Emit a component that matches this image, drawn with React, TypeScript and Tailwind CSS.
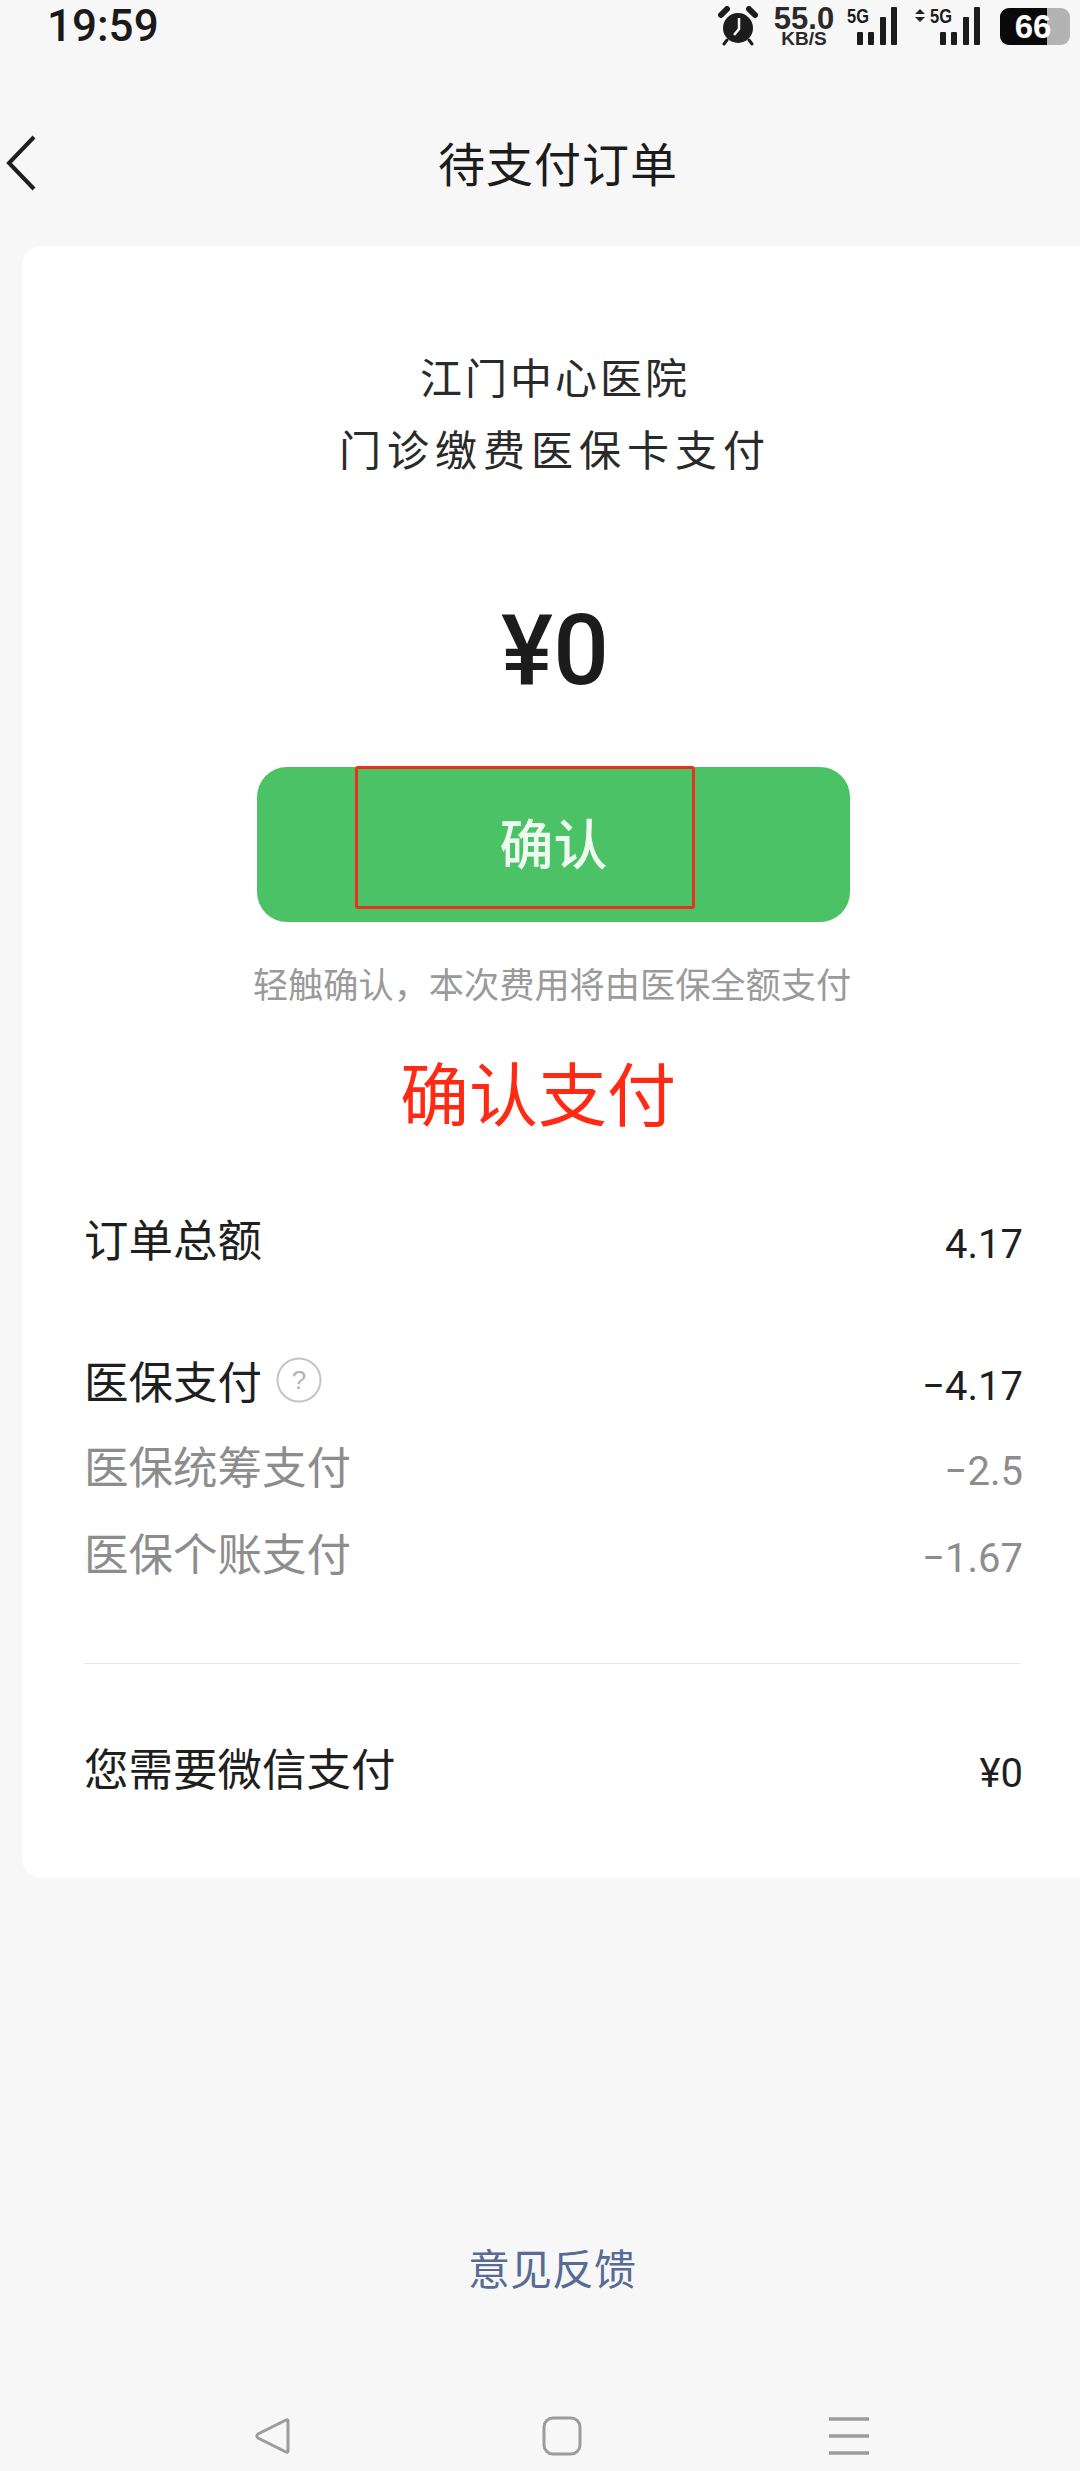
const cjk = { fontFamily: '"Noto Sans CJK SC", sans-serif' };
const sans = { fontFamily: '"Liberation Sans", sans-serif' };
const roboto = { fontFamily: 'Roboto, sans-serif' };

function Signal({ arrows }: { arrows?: boolean }) {
  return (
    <svg width={arrows ? 65 : 50} height="44" viewBox={arrows ? "0 -6 65 44" : "0 -6 50 44"} className="block mt-[-6px]">
      {arrows && <path d="M0 7l5-5 5 5zM0 10l5 5 5-5z" fill="#222" />}
      <g transform={arrows ? "translate(15 0)" : ""} fill="#1c1c1c">
        <text x="0" y="16" fontSize="20" fontWeight="700" fontFamily="Liberation Sans" textLength="22" lengthAdjust="spacingAndGlyphs">5G</text>
        <rect x="10" y="25" width="6" height="13" rx="1" />
        <rect x="21" y="25" width="6" height="13" rx="1" />
        <rect x="33" y="10" width="6" height="28" rx="1" />
        <rect x="44" y="0" width="6" height="38" rx="1" />
      </g>
    </svg>
  );
}

function Row({ label, value, muted, strong, className }: { label: string; value: string; muted?: boolean; strong?: boolean; className?: string }) {
  return (
    <div className={`flex items-center justify-between h-[54px] ${muted ? "text-[#8d8d8d]" : "text-[#1f1f1f]"} ${className ?? ""}`}>
      <div className="flex items-center text-[44.5px] leading-[54px]" style={cjk}>
        <span>{label}</span>
        {strong && (
          <svg width="46" height="46" viewBox="0 0 46 46" className="ml-[14px] block">
            <circle cx="23" cy="23" r="21.5" fill="none" stroke="#c4c4c4" strokeWidth="2" />
            <text x="23" y="32" fontSize="26" textAnchor="middle" fill="#b4b4b4" fontFamily="Liberation Sans">?</text>
          </svg>
        )}
      </div>
      <span className="text-[40px] leading-[54px] mt-[14px] mr-[-2px]" style={roboto}>{value}</span>
    </div>
  );
}

export default function App() {
  return (
    <div className="w-[1080px] h-[2471px] bg-[#f7f7f7] overflow-hidden flex flex-col">
      <div className="h-[52px] shrink-0 flex items-center justify-between pl-[47px] pr-[10px]">
        <span className="text-[44px] font-medium leading-none text-[#1a1a1a]" style={roboto}>19:59</span>
        <div className="flex items-center h-[40px]">
          <svg width="40" height="40" viewBox="0 0 40 40" className="block">
            <circle cx="20" cy="22" r="15" fill="#1c1c1c" />
            <path d="M3 9 9 3M31 3l6 6" stroke="#1c1c1c" strokeWidth="6" strokeLinecap="round" />
            <path d="M9 34l-3 4M31 34l3 4" stroke="#1c1c1c" strokeWidth="3" strokeLinecap="round" />
            <path d="M21 12v11l-5 6" stroke="#f7f7f7" strokeWidth="2.5" fill="none" />
          </svg>
          <div className="flex flex-col items-center w-[62px] ml-[15px] text-[#2a2a2a] font-bold" style={sans}>
            <span className="text-[31px] leading-[24px]">55.0</span>
            <span className="text-[19px] leading-[15px]">KB/S</span>
          </div>
          <div className="ml-[12px]"><Signal /></div>
          <div className="ml-[18px]"><Signal arrows /></div>
          <div className="relative w-[70px] h-[37px] rounded-[9px] bg-[#b3b3b3] overflow-hidden ml-[20px]">
            <div className="h-full w-[47px] bg-[#0a0a0a]" />
            <span className="absolute inset-0 flex items-center justify-center text-[33px] font-bold text-white leading-none pr-[4px]" style={sans}>66</span>
          </div>
        </div>
      </div>

      <div className="h-[194px] relative flex items-start justify-center shrink-0 pt-[80px] pl-[36px]">
        <svg width="34" height="58" viewBox="0 0 34 58" className="absolute left-[4px] top-[82px]">
          <path d="M30 3 5 29l25 26" fill="none" stroke="#1f1f1f" strokeWidth="4" />
        </svg>
        <h1 className="text-[47px] leading-[60px] text-[#1c1c1c] tracking-[1px]" style={cjk}>待支付订单</h1>
      </div>

      <div className="ml-[22px] w-[1080px] h-[1632px] shrink-0 bg-white rounded-l-[20px] flex flex-col">
        <div className="w-[1060px] flex flex-col items-center">
          <p className="mt-[94px] pl-[6px] text-[42px] leading-[72px] text-[#2a2a2a] text-center" style={cjk}>
            <span className="block tracking-[3px]">江门中心医院</span>
            <span className="block tracking-[6px]">门诊缴费医保卡支付</span>
          </p>
          <p className="mt-[112px] pl-[6px] text-[98px] leading-[110px] font-medium text-[#1c1c1c]" style={roboto}>¥0</p>
          <button className="relative mt-[61px] ml-[3px] w-[593px] h-[155px] pb-[6px] rounded-[30px] bg-[#4cc266] flex items-center justify-center text-[54px] leading-none text-[#eef9f0] font-medium" style={cjk}>
            <span className="absolute left-[98px] top-[-1px] w-[340px] h-[143px] border-[3px] border-[#e8321e] rounded-[3px]" />
            确认
          </button>
          <p className="mt-[40px] text-[35.2px] leading-[42px] text-[#9a9a9a]" style={cjk}>轻触确认，本次费用将由医保全额支付</p>
          <p className="mt-[42px] pr-[28px] text-[69px] leading-[90px] text-[#ff2a14]" style={cjk}>确认支付</p>
        </div>
        <div className="ml-[62px] w-[937px] flex flex-col">
          <Row label="订单总额" value="4.17" className="mt-[75px]" />
          <Row label="医保支付" value="−4.17" strong className="mt-[88px]" />
          <Row label="医保统筹支付" value="−2.5" muted className="mt-[31px]" />
          <Row label="医保个账支付" value="−1.67" muted className="mt-[33px]" />
          <div className="h-[1px] bg-[#e6e6e6] mt-[84px]" />
          <Row label="您需要微信支付" value="¥0" className="mt-[76px]" />
        </div>
      </div>

      <p className="mt-[361px] shrink-0 text-center text-[42px] leading-[56px] text-[#576b95] pl-[24px]" style={cjk}>意见反馈</p>

      <div className="mt-[120px] shrink-0 flex items-center justify-between pl-[252px] pr-[211px] h-[42px]">
        <svg width="40" height="40" viewBox="0 0 40 40" className="block">
          <path d="M34 4c1-.6 2 0 2 1v30c0 1-1 1.600-2 1L6 22c-1.500-1-1.500-3 0-4z" fill="none" stroke="#9c9c9c" strokeWidth="3" />
        </svg>
        <svg width="40" height="40" viewBox="0 0 40 40" className="block ml-[2px]">
          <rect x="2" y="2" width="36" height="36" rx="9" fill="none" stroke="#9c9c9c" strokeWidth="3" />
        </svg>
        <svg width="40" height="40" viewBox="0 0 40 40" className="block">
          <path d="M0 3h40M0 20h40M0 37h40" stroke="#9c9c9c" strokeWidth="3.500" />
        </svg>
      </div>
    </div>
  );
}
